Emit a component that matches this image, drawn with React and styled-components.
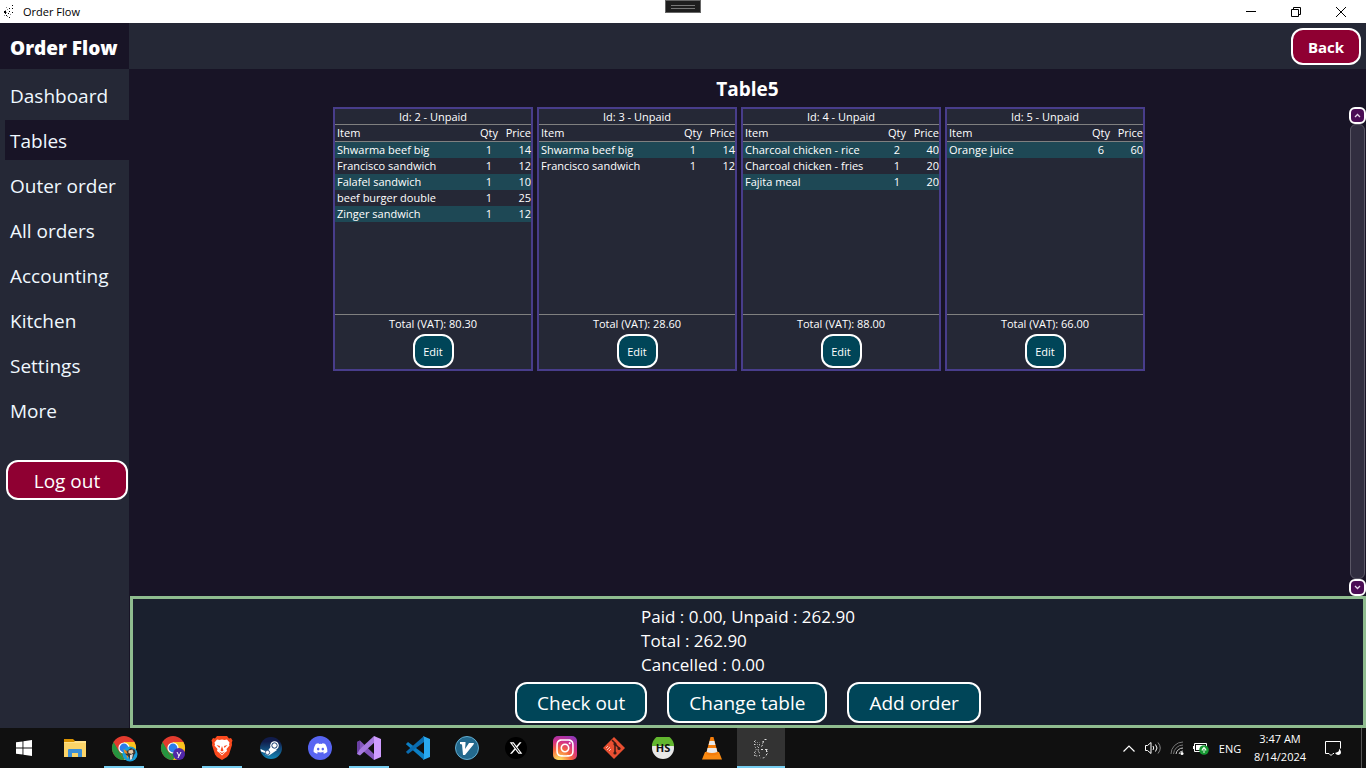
import React from "react";
import styled, { createGlobalStyle, css } from "styled-components";
import { FaDiscord, FaInstagram, FaXTwitter } from "react-icons/fa6";

const GlobalStyle = createGlobalStyle`
  *, *::before, *::after { box-sizing: border-box; }
  body {
    margin: 0;
    background: #181426;
    color: #fff;
    font-family: "Open Sans", "Noto Sans", sans-serif;
    font-size: 11px;
  }
  button { font-family: inherit; color: inherit; margin: 0; padding: 0; border: 0; background: none; }
`;

const Screen = styled.div`
  display: flex;
  flex-direction: column;
  min-height: 100vh;
`;

/* ---------- window title bar ---------- */

const TitleBar = styled.header`
  position: relative;
  display: flex;
  align-items: center;
  height: 23px;
  padding: 0 3px;
  background: #fff;
  color: #000;
`;

const TitleText = styled.span`
  flex: 1;
  padding-left: 7px;
  font-size: 11px;
  line-height: 20px;
`;

const WindowButton = styled.button`
  display: flex;
  align-items: center;
  justify-content: center;
  width: 45px;
  height: 20px;
`;

const DebugHandle = styled.div`
  position: absolute;
  top: 0;
  left: 50%;
  width: 36px;
  height: 13px;
  margin-left: -18px;
  padding: 4px 5px;
  border: 1px solid #666;
  background: #1e1e1e;

  &::before {
    content: "";
    display: block;
    height: 4px;
    border-top: 1px solid #777;
    border-bottom: 1px solid #777;
  }
`;

/* ---------- application shell ---------- */

const AppHeader = styled.div`
  display: flex;
  height: 46px;
  background: #252836;
`;

const Brand = styled.div`
  width: 129px;
  padding-left: 10px;
  background: #181426;
  font-size: 19px;
  font-weight: 800;
  line-height: 50px;
  white-space: nowrap;
`;

const HeaderActions = styled.div`
  flex: 1;
  display: flex;
  align-items: center;
  justify-content: flex-end;
  padding-right: 5px;
`;

const Body = styled.div`
  flex: 1;
  display: flex;
`;

const Sidebar = styled.aside`
  display: flex;
  flex-direction: column;
  width: 129px;
  padding: 6px 0 0 5px;
  background: #252836;
`;

const Nav = styled.nav`
  display: flex;
  flex-direction: column;
  gap: 5px;
  margin-bottom: 30px;
`;

const NavLink = styled.a`
  height: 40px;
  padding-left: 5px;
  background: ${(p) => (p.$active ? "#181426" : "transparent")};
  color: #f0f8ff;
  font-size: 19px;
  line-height: 42px;
  text-decoration: none;
  white-space: nowrap;
`;

const Button = styled.button`
  border: 2px solid #fff;
  border-radius: 12px;
  background: ${(p) => (p.$danger ? "#8f0032" : "#004558")};
  color: #fff;
  white-space: nowrap;

  ${(p) => p.$size === "large" && css`
    height: 41px;
    padding: 0 20px;
    font-size: 19px;
    line-height: 38px;
  `}
  ${(p) => p.$size === "medium" && css`
    width: 70px;
    height: 37px;
    padding-top: 1px;
    font-size: 15px;
    font-weight: 700;
  `}
  ${(p) => p.$size === "small" && css`
    width: 41px;
    height: 34px;
    font-size: 11px;
  `}
`;

const LogoutButton = styled(Button)`
  height: 40px;
  margin: 0 1px;
`;

const Main = styled.main`
  flex: 1;
  display: flex;
  flex-direction: column;
`;

const PageTitle = styled.h1`
  margin: 0;
  padding-top: 2px;
  font-size: 19px;
  font-weight: 700;
  line-height: 36px;
  text-align: center;
`;

const OrdersArea = styled.div`
  flex: 1;
  display: flex;
`;

const OrderList = styled.div`
  flex: 1;
  display: flex;
  flex-wrap: wrap;
  align-items: flex-start;
  justify-content: center;
  gap: 4px;
`;

/* ---------- order card ---------- */

const Card = styled.article`
  display: flex;
  flex-direction: column;
  width: 200px;
  height: 264px;
  border: 2px solid #483d8b;
  background: #252836;
`;

const CardTitle = styled.h2`
  margin: 0;
  border-bottom: 1px solid #808080;
  font-size: 11px;
  font-weight: 400;
  line-height: 15px;
  text-align: center;
`;

const CardItems = styled.div`
  flex: 1;
  border-bottom: 1px solid #808080;
`;

const ItemTable = styled.table`
  width: 100%;
  border-spacing: 0;
  table-layout: fixed;
`;

const ItemRow = styled.tr`
  background: ${(p) => (p.$striped ? "#1e4855" : "transparent")};
`;

const cell = css`
  padding: 0 0 0 2px;
  height: 16px;
  font-size: 11px;
  font-weight: 400;
  line-height: 16px;
  white-space: nowrap;
  text-align: ${(p) => p.$align || "left"};
  width: ${(p) => p.$width || "auto"};
`;

const HeadCell = styled.th`
  ${cell}
  height: 17px;
  border-bottom: 1px solid #808080;
`;
const Cell = styled.td`${cell}`;

const CardFooter = styled.div`
  display: flex;
  flex-direction: column;
  align-items: center;
  gap: 1px;
  padding-bottom: 1px;
  line-height: 18px;
`;

/* ---------- scroll bar ---------- */

const ScrollBar = styled.div`
  display: flex;
  flex-direction: column;
  width: 17px;
`;

const ScrollButton = styled.button`
  display: flex;
  align-items: center;
  justify-content: center;
  height: 17px;
  border: 2px solid #fff;
  border-radius: 6px;
  background: #4b0d55;
`;

const ScrollThumb = styled.div`
  flex: 1;
  margin: 0 1px;
  border: 1px solid #5a5766;
  border-radius: 6px;
  background: #312e40;
`;

/* ---------- totals ---------- */

const Summary = styled.section`
  display: flex;
  flex-direction: column;
  align-items: center;
  gap: 5px;
  margin-left: 1px;
  padding: 6px 0 2px;
  border: 3px solid #8fbc8f;
  background: #1a202e;
`;

const Totals = styled.div`
  font-size: 17px;
  line-height: 24px;
`;

const SummaryActions = styled.div`
  display: flex;
  gap: 20px;
`;

/* ---------- taskbar ---------- */

const Taskbar = styled.footer`
  display: flex;
  align-items: center;
  height: 40px;
  background: #101010;
`;

const TaskButtons = styled.div`
  flex: 1;
  display: flex;
  gap: 1px;
`;

const TaskButton = styled.button`
  display: flex;
  align-items: center;
  justify-content: center;
  width: 48px;
  height: 40px;
  background: ${(p) => (p.$active ? "#333" : "transparent")};
  ${(p) => p.$running && css`
    background: linear-gradient(#76cdf0, #76cdf0) center bottom / ${p.$active ? "48px" : "40px"} 2px no-repeat
      ${p.$active ? "#333" : "transparent"};
  `}
`;

const StartButton = styled(TaskButton)`
  margin-right: 2px;
`;

const Tray = styled.div`
  display: flex;
  align-items: center;
  height: 40px;
`;

const TrayButton = styled.button`
  display: flex;
  align-items: center;
  justify-content: center;
  width: 24px;
  height: 40px;
`;

const Language = styled.span`
  width: 34px;
  font-size: 11px;
  text-align: center;
`;

const Clock = styled.time`
  width: 66px;
  font-size: 11px;
  line-height: 18px;
  text-align: center;
`;

const Notifications = styled(TrayButton)`
  width: 40px;
`;

const ShowDesktop = styled.button`
  width: 5px;
  height: 40px;
  margin-left: 8px;
  border-left: 1px solid #555;
`;

/* ---------- drawings ---------- */

const darkDots = [[1, 6], [2, 6], [1, 7], [2, 7], [2, 8], [6, 3], [9, 0], [9, 3], [6, 6], [5, 8], [9, 7], [6, 12], [3, 10]];
const greyDots = [[3, 2], [2, 5], [4, 4], [3, 7], [1, 10], [4, 11], [7, 9]];

const AppDots = () => (
  <svg width="13" height="14" viewBox="0 0 13 14" aria-hidden="true">
    {darkDots.map(([x, y]) => <rect key={`${x}-${y}`} x={x} y={y} width="1" height="1" fill="#000" />)}
    {greyDots.map(([x, y]) => <rect key={`${x}-${y}`} x={x} y={y} width="1" height="1" fill="#888" />)}
  </svg>
);

const TaskDots = () => (
  <svg width="24" height="24" viewBox="0 0 24 24" aria-hidden="true" fill="none" stroke="#ddd">
    <path strokeDasharray="1 2" d="M5.500 5v5l2 3-2 3v4h5v-3l-2-4 2-3V6" />
    <path strokeDasharray="2 2" d="M15 3.500h4M14.500 5l-1 4-2 3M12 13.500h6M17.500 14v5l-3 3h-3" />
    <path strokeDasharray="1 1" stroke="#888" d="M6.500 4v5M8.500 6v6M13.500 5v4M6.500 15v5M9.500 13v4M18.500 13v5M15 3.500h4" />
  </svg>
);

const WindowsLogo = () => (
  <svg width="16" height="16" viewBox="0 0 16 16" aria-hidden="true" fill="#fff">
    <path d="M0 2.3L6.5 1.4v6.2H0zM7.4 1.3L16 0v7.6H7.4zM0 8.4h6.5v6.2L0 13.7zM7.4 8.4H16V16l-8.6-1.3z" />
  </svg>
);

const FolderIcon = () => (
  <svg width="22" height="20" viewBox="0 0 22 20" aria-hidden="true">
    <path d="M0 1h9l2 2h11v4H0z" fill="#d99200" />
    <path d="M0 4h22v15H0z" fill="#fbd468" />
    <path d="M0 4h10l1-1h11v2H0z" fill="#ffe18c" />
    <path d="M4 19v-7a1 1 0 011-1h12a1 1 0 011 1v7h-4v-4H8v4z" fill="#3c8fd6" />
  </svg>
);

const ChromeIcon = ({ badge }) => (
  <svg width="24" height="24" viewBox="0 0 24 24" overflow="visible" aria-hidden="true">
    <circle cx="12" cy="12" r="12" fill="#e33b2e" />
    <path d="M12 12L12 24A12 12 0 0022.4 6H12z" fill="#fcc31e" />
    <path d="M1.6 6l5.2 9L12 24A12 12 0 011.6 6z" fill="#26943f" />
    <path d="M7 14l5-2 5 3-5 9z" fill="#26943f" />
    <circle cx="12" cy="12" r="5.6" fill="#fff" />
    <circle cx="12" cy="12" r="4.4" fill="#2b7de9" />
    {badge === "photo" ? (
      <g>
        <circle cx="18" cy="18" r="7.5" fill="#179edb" />
        <path d="M12 14l3 1 4-3 4 2 .5 3-1.500 2-1 3-3 2-1-3-3-2-1-3z" fill="#3a3432" />
        <path d="M16.500 14.500l4-1 1 3-2 1.500-3-1z" fill="#e4c6a4" />
        <path d="M11.500 13l3 2 1 3-3-1zM14 19l2 1v3z" fill="#e98b25" />
        <path d="M18 19l3-1-1 5-2 1z" fill="#ddd" />
      </g>
    ) : (
      <g>
        <circle cx="18" cy="18" r="6" fill="#5127a8" />
        <path d="M16 16l2 4M20 16l-3 6" stroke="#fff" strokeWidth="1" fill="none" />
      </g>
    )}
  </svg>
);

const BraveIcon = () => (
  <svg width="22" height="24" viewBox="0 0 22 24" aria-hidden="true">
    <path d="M6 0h10l2 2.4 2-.4 1.5 2.5-.7 2L21 9l-3 9.5L16 21l-5 3-5-3-2-2.5L1 9l.2-2.5-.7-2L2 2l2 .4z" fill="#fb4a1e" />
    <path d="M11 3.5l2.5.5 2.5-.5 2.5 3-.5 2 .5 1-3 3.500.5 2-2 1.5-3 3-3-3-2-1.5.5-2-3-3.500.5-1-.5-2 2.500-3 2.500.5z" fill="#fff" />
    <path d="M5.5 9l3.500 1-.5 2zM16.500 9L13 10l.5 2zM11 10l1.500 4.500L11 15.500 9.500 14.500zM8 15.500l3 1.500 3-1.500-3 3z" fill="#fb4a1e" />
  </svg>
);

const SteamIcon = () => (
  <svg width="22" height="22" viewBox="0 0 22 22" aria-hidden="true">
    <defs>
      <linearGradient id="steam" x1="0" y1="0" x2="0" y2="1">
        <stop offset="0.2" stopColor="#111c4b" />
        <stop offset="1" stopColor="#1387b8" />
      </linearGradient>
    </defs>
    <circle cx="11" cy="11" r="11" fill="url(#steam)" />
    <path d="M.5 12L5 14l3-.5 3-4L17 13l-5 3.500-3 2-3-.5-1-2-4-1.500z" fill="#fff" />
    <circle cx="14.5" cy="8.5" r="4.3" fill="#fff" />
    <circle cx="14.5" cy="8.5" r="2.700" fill="#fff" stroke="#14386e" />
    <circle cx="7.5" cy="15.5" r="2.200" fill="#fff" stroke="#14386e" strokeWidth=".8" />
  </svg>
);

const Disc = styled.span`
  display: flex;
  align-items: center;
  justify-content: center;
  width: ${(p) => p.$size};
  height: ${(p) => p.$size};
  border-radius: ${(p) => p.$radius || "50%"};
  background: ${(p) => p.$fill};
  color: #fff;
`;

const VisualStudioIcon = () => (
  <svg width="24" height="24" viewBox="0 0 24 24" aria-hidden="true">
    <path d="M0 6l3-1.500 15 14.500-1 5L3 12.500v5L0 18z" fill="#8457bd" />
    <path d="M0 6l3-1.500v14L0 17.500z" fill="#6a3fa3" />
    <path d="M3 19.500L0 18l3-5L17 0l1 6z" fill="#a67adf" />
    <path d="M17 0l7 3v18l-7 3z" fill="#cf9cff" />
  </svg>
);

const VsCodeIcon = () => (
  <svg width="24" height="24" viewBox="0 0 24 24" aria-hidden="true">
    <path d="M0 8l2-2 16 12v6L.3 8.600z" fill="#0c7fc4" />
    <path d="M0 16l2 2L18 6V0L.3 15.400z" fill="#0a6cb0" />
    <path d="M17 0l7 3v18l-7 3 1-1.500v-21z" fill="#29a9f0" />
  </svg>
);

const VimiumIcon = () => (
  <svg width="24" height="24" viewBox="0 0 24 24" aria-hidden="true">
    <circle cx="12" cy="12" r="11.5" fill="#23698d" stroke="#63add0" />
    <path d="M5 6h5.500v2L10 13l4-6h5l-.5 1.500L10 19H8L7 8.500 5 8z" fill="#fff" />
  </svg>
);

const GitIcon = () => (
  <svg width="22" height="22" viewBox="0 0 22 22" aria-hidden="true">
    <path d="M11 0l11 11-11 11L0 11z" fill="#e94f31" />
    <path d="M9 3l3 3v10M12 7l4 4" stroke="#3a1a14" strokeWidth="1.5" fill="none" />
    <circle cx="12" cy="7" r="1.6" fill="#3a1a14" />
    <circle cx="12" cy="16" r="1.6" fill="#3a1a14" />
    <circle cx="16" cy="11.5" r="1.6" fill="#3a1a14" />
    <path d="M3 11l2-2M4 13l3-3M6 14l2-2" stroke="#f5c1b5" fill="none" />
  </svg>
);

const HeidiIcon = () => (
  <svg width="22" height="22" viewBox="0 0 22 22" aria-hidden="true">
    <circle cx="11" cy="11" r="11" fill="#e8e8e8" />
    <path d="M0 9a11 11 0 0122 0z" fill="#62b62f" />
    <text x="11" y="15" textAnchor="middle" fontSize="11" fontWeight="700" fill="#111" fontFamily="Open Sans, sans-serif">HS</text>
  </svg>
);

const ConeIcon = () => (
  <svg width="20" height="23" viewBox="0 0 20 23" aria-hidden="true">
    <path d="M3 15h14l3 7.500H0z" fill="#f98a12" />
    <path d="M8.5 0h3L16 17q-6 3-12 0z" fill="#f47d0b" />
    <path d="M7.6 4h4.800l1 4H6.600zM5.600 11h8.800l1 4q-5.400 2-10.800 0z" fill="#e9e9e9" />
  </svg>
);

const ChevronUp = () => (
  <svg width="12" height="7" viewBox="0 0 12 7" aria-hidden="true" fill="none" stroke="#fff" strokeWidth="1.2">
    <path d="M.5 6.500L6 1l5.500 5.500" />
  </svg>
);

const SpeakerIcon = () => (
  <svg width="17" height="14" viewBox="0 0 17 14" aria-hidden="true" fill="none" stroke="#fff">
    <path d="M.5 4.500h2L6 1.500v11l-3.500-3h-2z" />
    <path d="M8 5q1.500 2 0 4M10.500 3.500q3 3.500 0 7" />
    <path d="M13 1.500q4.500 5.500 0 11" stroke="#888" />
  </svg>
);

const WifiIcon = () => (
  <svg width="14" height="14" viewBox="0 0 14 14" aria-hidden="true" fill="none">
    <path d="M1 13A12 12 0 0113 1M3.500 13A9.500 9.500 0 0113 4" stroke="#777" />
    <path d="M6 13A7 7 0 0113 7M9 13a4 4 0 014-3" stroke="#ccc" />
    <circle cx="12" cy="12.5" r="1.5" fill="#fff" />
  </svg>
);

const BatteryIcon = () => (
  <svg width="16" height="14" viewBox="0 0 16 14" aria-hidden="true">
    <path d="M1.500 2.500h12v8h-12z" fill="none" stroke="#fff" />
    <path d="M3 4h9v5H3zM0 5h1v3H0z" fill="#fff" />
    <circle cx="11" cy="9" r="4.8" fill="#159832" />
    <path d="M11 5.500q-2.500 2.500-2.500 4h5q0-1.500-2.500-4zM10.500 8h1v4h-1z" fill="#e8f8e8" />
  </svg>
);

const NoteIcon = () => (
  <svg width="17" height="17" viewBox="0 0 17 17" aria-hidden="true">
    <path d="M9 13.500H8l-2 2-2-2H.5v-12h15v7" fill="none" stroke="#fff" />
    <path d="M14 8.500q1 3.500-4 4.500 2.500 3.500 5.500 1 1.500-2.500-1.500-5.500z" fill="#fff" />
  </svg>
);

const ScrollArrow = ({ down }) => (
  <svg width="7" height="5" viewBox="0 0 7 5" aria-hidden="true" fill="none" stroke="#e6d8ea" strokeWidth="1.3">
    <path d={down ? "M1 1l2.500 2.500L6 1" : "M1 4l2.500-2.500L6 4"} />
  </svg>
);

/* ---------- data ---------- */

const navItems = ["Dashboard", "Tables", "Outer order", "All orders", "Accounting", "Kitchen", "Settings", "More"];

const orders = [
  {
    id: 2,
    total: "80.30",
    items: [
      ["Shwarma beef big", 1, 14],
      ["Francisco sandwich", 1, 12],
      ["Falafel sandwich", 1, 10],
      ["beef burger double", 1, 25],
      ["Zinger sandwich", 1, 12],
    ],
  },
  { id: 3, total: "28.60", items: [["Shwarma beef big", 1, 14], ["Francisco sandwich", 1, 12]] },
  {
    id: 4,
    total: "88.00",
    items: [["Charcoal chicken - rice", 2, 40], ["Charcoal chicken - fries", 1, 20], ["Fajita meal", 1, 20]],
  },
  { id: 5, total: "66.00", items: [["Orange juice", 6, 60]] },
];

const tasks = [
  { name: "File Explorer", icon: <FolderIcon /> },
  { name: "Chrome", icon: <ChromeIcon badge="photo" />, running: true },
  { name: "Chrome, second profile", icon: <ChromeIcon badge="letter" /> },
  { name: "Brave", icon: <BraveIcon />, running: true },
  { name: "Steam", icon: <SteamIcon /> },
  { name: "Discord", icon: <Disc $size="24px" $fill="#5865f2"><FaDiscord size={15} /></Disc> },
  { name: "Visual Studio", icon: <VisualStudioIcon />, running: true },
  { name: "Visual Studio Code", icon: <VsCodeIcon /> },
  { name: "Vim", icon: <VimiumIcon /> },
  { name: "X", icon: <Disc $size="22px" $fill="#000"><FaXTwitter size={14} /></Disc> },
  {
    name: "Instagram",
    icon: (
      <Disc $size="24px" $radius="5px" $fill="radial-gradient(circle at 25% 105%, #fdd35c 10%, #f5643c 40%, #d22f88 65%, #7a3cc8 100%)">
        <FaInstagram size={20} />
      </Disc>
    ),
  },
  { name: "Git", icon: <GitIcon /> },
  { name: "HeidiSQL", icon: <HeidiIcon /> },
  { name: "VLC", icon: <ConeIcon /> },
  { name: "Order Flow", icon: <TaskDots />, running: true, active: true },
];

function OrderCard({ order }) {
  return (
    <Card>
      <CardTitle>Id: {order.id} - Unpaid</CardTitle>
      <CardItems>
        <ItemTable>
          <thead>
            <tr>
              <HeadCell scope="col">Item</HeadCell>
              <HeadCell scope="col" $width="26px" $align="center">Qty</HeadCell>
              <HeadCell scope="col" $width="30px" $align="right">Price</HeadCell>
            </tr>
          </thead>
          <tbody>
            {order.items.map(([name, qty, price], i) => (
              <ItemRow key={name} $striped={i % 2 === 0}>
                <Cell>{name}</Cell>
                <Cell $align="center">{qty}</Cell>
                <Cell $align="right">{price}</Cell>
              </ItemRow>
            ))}
          </tbody>
        </ItemTable>
      </CardItems>
      <CardFooter>
        <span>Total (VAT): {order.total}</span>
        <Button $size="small">Edit</Button>
      </CardFooter>
    </Card>
  );
}

export default function App() {
  return (
    <Screen>
      <GlobalStyle />
      <TitleBar>
        <AppDots />
        <TitleText>Order Flow</TitleText>
        <DebugHandle />
        <WindowButton aria-label="Minimize">
          <svg width="10" height="10" viewBox="0 0 10 10"><path d="M0 4.500h10" stroke="#000" /></svg>
        </WindowButton>
        <WindowButton aria-label="Restore">
          <svg width="10" height="10" viewBox="0 0 10 10" fill="none" stroke="#000"><path d="M.5 2.500h7v7h-7zM2.500 2.500v-2h7v7h-2" /></svg>
        </WindowButton>
        <WindowButton aria-label="Close">
          <svg width="10" height="10" viewBox="0 0 10 10" stroke="#000"><path d="M0 0l10 10M10 0L0 10" /></svg>
        </WindowButton>
      </TitleBar>

      <AppHeader>
        <Brand>Order Flow</Brand>
        <HeaderActions>
          <Button $size="medium" $danger>Back</Button>
        </HeaderActions>
      </AppHeader>

      <Body>
        <Sidebar>
          <Nav>
            {navItems.map((name) => (
              <NavLink key={name} href="#" $active={name === "Tables"}>{name}</NavLink>
            ))}
          </Nav>
          <LogoutButton $size="large" $danger>Log out</LogoutButton>
        </Sidebar>

        <Main>
          <PageTitle>Table5</PageTitle>
          <OrdersArea>
            <OrderList>
              {orders.map((order) => <OrderCard key={order.id} order={order} />)}
            </OrderList>
            <ScrollBar>
              <ScrollButton aria-label="Scroll up"><ScrollArrow /></ScrollButton>
              <ScrollThumb />
              <ScrollButton aria-label="Scroll down"><ScrollArrow down /></ScrollButton>
            </ScrollBar>
          </OrdersArea>
          <Summary>
            <Totals>
              <div>Paid : 0.00, Unpaid : 262.90</div>
              <div>Total : 262.90</div>
              <div>Cancelled : 0.00</div>
            </Totals>
            <SummaryActions>
              <Button $size="large">Check out</Button>
              <Button $size="large">Change table</Button>
              <Button $size="large">Add order</Button>
            </SummaryActions>
          </Summary>
        </Main>
      </Body>

      <Taskbar>
        <TaskButtons>
          <StartButton aria-label="Start"><WindowsLogo /></StartButton>
          {tasks.map((t) => (
            <TaskButton key={t.name} aria-label={t.name} $running={t.running} $active={t.active}>{t.icon}</TaskButton>
          ))}
        </TaskButtons>
        <Tray>
          <TrayButton aria-label="Show hidden icons"><ChevronUp /></TrayButton>
          <TrayButton aria-label="Volume"><SpeakerIcon /></TrayButton>
          <TrayButton aria-label="Network"><WifiIcon /></TrayButton>
          <TrayButton aria-label="Battery"><BatteryIcon /></TrayButton>
          <Language>ENG</Language>
          <Clock>3:47 AM<br />8/14/2024</Clock>
          <Notifications aria-label="Notifications"><NoteIcon /></Notifications>
          <ShowDesktop aria-label="Show desktop" />
        </Tray>
      </Taskbar>
    </Screen>
  );
}
